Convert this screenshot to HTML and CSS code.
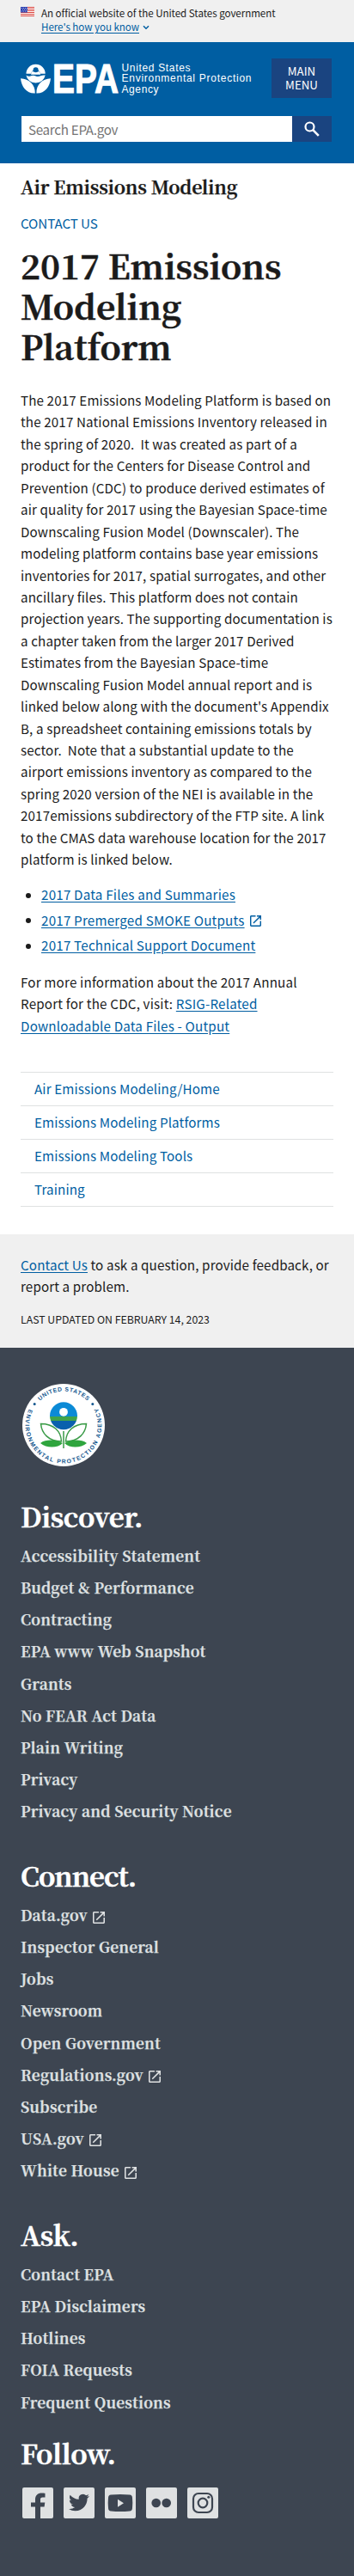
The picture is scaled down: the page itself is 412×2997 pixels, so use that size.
FILE: index.html
```html
<!DOCTYPE html>
<html lang="en">
<head>
<meta charset="utf-8">
<title>2017 Emissions Modeling Platform | US EPA</title>
<link rel="stylesheet" href="styles.css">
</head>
<body>
<svg width="0" height="0" class="defs" aria-hidden="true">
  <symbol id="ext" viewBox="0 0 18 18"><path fill="currentColor" d="M16 16H2V2h7V0H2C.9 0 0 .9 0 2v14c0 1.100.9 2 2 2h14c1.100 0 2-.9 2-2V9h-2v7zM11 0v2h3.590l-9.830 9.830 1.410 1.410L16 3.410V7h2V0h-7z"/></symbol>
</svg>

<section class="banner">
  <svg class="flag" viewBox="0 0 16 11">
    <rect width="16" height="11" fill="#fff"/>
    <path d="M0 .5h16M0 2.500h16M0 4.500h16M0 6.500h16M0 8.500h16M0 10.500h16" stroke="#d9413a"/>
    <rect width="8" height="6.500" fill="#2b3fb0"/>
    <path d="M1 1.500h7M2 3.200h6M1 5h7" stroke="#fff" stroke-width=".8" stroke-dasharray=".8 1.200"/>
  </svg>
  <div>
    <p>An official website of the United States government</p>
    <p class="know"><a href="#">Here's how you know</a><svg viewBox="0 0 8 6"><path d="M1 1.300l3 3 3-3" fill="none" stroke="#005ea2" stroke-width="1.500"/></svg></p>
  </div>
</section>

<header class="header">
  <div class="header-top">
    <svg class="logo" viewBox="0 0 270 38">
      <g fill="#fff">
        <path d="M6.500 12.800a11.100 11.100 0 0 1 22.200 0h-5.600a5.600 5.600 0 0 0-11 0z"/>
        <path d="M12.800 10.300h9.600l.8 3.500h-11.200z"/>
        <circle cx="17.600" cy="8.300" r="3" fill="#005ea2"/>
        <path d="M6.400 14.600q2.800 2 5.600.6 2.800-1 5.600.2 2.800 1.200 5.600-.2 2.800-1 5.500-.6-2 8.500-11.100 8.800-9.200-.3-11.200-8.800z"/>
        <path d="M0 18.200C10 19 17 25 16.800 35.500 7 36 1 28 0 18.200zM35 18.200C25 19 18.200 25 18.400 35.500 28 36 34 28 35 18.200z"/>
      </g>
      <text class="logo-epa" x="37" y="35" textLength="77" lengthAdjust="spacingAndGlyphs">EPA</text>
      <g class="logo-name">
        <text x="117.500" y="9.800" textLength="80">United States</text>
        <text x="117.500" y="22.300" textLength="151">Environmental Protection</text>
        <text x="117.500" y="35" textLength="43">Agency</text>
      </g>
    </svg>
    <button class="menu">MAIN<br>MENU</button>
  </div>
  <form class="search">
    <input type="text" placeholder="Search EPA.gov">
    <button type="button" aria-label="Search"><svg viewBox="0 0 18 18"><circle cx="6.500" cy="6.500" r="5" fill="none" stroke="#fff" stroke-width="2.200"/><path d="M10.200 10.200l6.600 6.600" stroke="#fff" stroke-width="2.600"/></svg></button>
  </form>
</header>

<main class="main">
  <h2 class="site">Air Emissions Modeling</h2>
  <a class="contact" href="#">CONTACT US</a>
  <h1>2017 Emissions<br>Modeling<br>Platform</h1>
  <p class="text">The 2017 Emissions Modeling Platform is based on<br>the 2017 National Emissions Inventory released in<br>the spring of 2020.&nbsp; It was created as part of a<br>product for the Centers for Disease Control and<br>Prevention (CDC) to produce derived estimates of<br>air quality for 2017 using the Bayesian Space-time<br>Downscaling Fusion Model (Downscaler). The<br>modeling platform contains base year emissions<br>inventories for 2017, spatial surrogates, and other<br>ancillary files. This platform does not contain<br>projection years. The supporting documentation is<br>a chapter taken from the larger 2017 Derived<br>Estimates from the Bayesian Space-time<br>Downscaling Fusion Model annual report and is<br>linked below along with the document's Appendix<br>B, a spreadsheet containing emissions totals by<br>sector.&nbsp; Note that a substantial update to the<br>airport emissions inventory as compared to the<br>spring 2020 version of the NEI is available in the<br>2017emissions subdirectory of the FTP site. A link<br>to the CMAS data warehouse location for the 2017<br>platform is linked below.</p>
  <ul class="files">
    <li><a href="#">2017 Data Files and Summaries</a></li>
    <li><a href="#">2017 Premerged SMOKE Outputs</a><svg class="ext"><use href="#ext"/></svg></li>
    <li><a href="#">2017 Technical Support Document</a></li>
  </ul>
  <p class="text more">For more information about the 2017 Annual<br>Report for the CDC, visit: <a href="#">RSIG-Related<br>Downloadable Data Files - Output</a></p>
  <nav class="sidenav">
    <a href="#">Air Emissions Modeling/Home</a>
    <a href="#">Emissions Modeling Platforms</a>
    <a href="#">Emissions Modeling Tools</a>
    <a href="#">Training</a>
  </nav>
</main>

<section class="feedback">
  <p class="text"><a href="#">Contact Us</a> to ask a question, provide feedback, or<br>report a problem.</p>
  <p class="updated">LAST UPDATED ON FEBRUARY 14, 2023</p>
</section>

<footer class="footer">
  <svg class="seal" viewBox="0 0 96 96">
    <defs>
      <path id="arc-top" d="M8.500 48a39.500 39.500 0 0 1 79 0"/>
      <path id="arc-low" d="M8.160 28.570a44.400 44.400 0 1 0 79.680 0"/>
      <clipPath id="ball"><circle cx="48" cy="37.300" r="16"/></clipPath>
    </defs>
    <circle cx="48" cy="48" r="48" fill="#fff"/>
    <g class="seal-text">
      <text><textPath href="#arc-top" startOffset="31.500" textLength="61">UNITED STATES</textPath></text>
      <text><textPath href="#arc-low" startOffset="1" textLength="179">ENVIRONMENTAL PROTECTION AGENCY</textPath></text>
    </g>
    <circle cx="14.200" cy="23.500" r="1.500" fill="#14578f"/><circle cx="81.800" cy="23.500" r="1.500" fill="#14578f"/>
    <g clip-path="url(#ball)">
      <rect x="32" y="21" width="32" height="17" fill="#0b8ad6"/>
      <rect x="32" y="38" width="32" height="5" fill="#3fa34a"/>
      <rect x="32" y="43" width="32" height="11" fill="#0a60ad"/>
    </g>
    <circle cx="48" cy="32.800" r="4.900" fill="#fff"/>
    <path d="M48 55v20M21.500 46.500c1 11 9 20.500 24 20.500-.5-12-9-20.500-24-20.500zM74.500 46.500c-1 11-9 20.500-24 20.500.5-12 9-20.500 24-20.500z" fill="none" stroke="#3a9b47" stroke-width="1.500"/>
    <path d="M21 69c7-5 18-4 26 0-6 6-19 6-26 0zM75 69c-7-5-18-4-26 0 6 6 19 6 26 0z" fill="#2fa53d"/>
  </svg>

  <h2>Discover.</h2>
  <ul class="links">
    <li>Accessibility Statement</li>
    <li>Budget &amp; Performance</li>
    <li>Contracting</li>
    <li>EPA www Web Snapshot</li>
    <li>Grants</li>
    <li>No FEAR Act Data</li>
    <li>Plain Writing</li>
    <li>Privacy</li>
    <li>Privacy and Security Notice</li>
  </ul>

  <h2 class="connect">Connect.</h2>
  <ul class="links">
    <li>Data.gov<svg class="ext"><use href="#ext"/></svg></li>
    <li>Inspector General</li>
    <li>Jobs</li>
    <li>Newsroom</li>
    <li>Open Government</li>
    <li>Regulations.gov<svg class="ext"><use href="#ext"/></svg></li>
    <li>Subscribe</li>
    <li>USA.gov<svg class="ext"><use href="#ext"/></svg></li>
    <li>White House<svg class="ext"><use href="#ext"/></svg></li>
  </ul>

  <h2>Ask.</h2>
  <ul class="links last">
    <li>Contact EPA</li>
    <li>EPA Disclaimers</li>
    <li>Hotlines</li>
    <li>FOIA Requests</li>
    <li>Frequent Questions</li>
  </ul>

  <h2>Follow.</h2>
  <div class="social">
    <svg viewBox="0 0 36 36"><path d="M15 36V22.500h-5v-5h5V14c0-5 3-7.500 7.500-7.500 2 0 3 .2 4 .3v4.700h-2.800c-2.200 0-2.700 1-2.700 2.600v3.400h5.300l-.7 5H21V36z"/></svg>
    <svg viewBox="0 0 36 36"><path transform="translate(6 5.500)" d="M23.953 4.570a10 10 0 01-2.825.775 4.958 4.958 0 002.163-2.723c-.951.555-2.005.959-3.127 1.184a4.920 4.920 0 00-8.384 4.482C7.690 8.095 4.067 6.130 1.640 3.162a4.822 4.822 0 00-.666 2.475c0 1.710.87 3.213 2.188 4.096a4.904 4.904 0 01-2.228-.616v.06a4.923 4.923 0 003.946 4.827 4.996 4.996 0 01-2.212.085 4.936 4.936 0 004.604 3.417 9.867 9.867 0 01-6.102 2.105c-.39 0-.779-.023-1.170-.067a13.995 13.995 0 007.557 2.209c9.053 0 13.998-7.496 13.998-13.985 0-.21 0-.42-.015-.63A9.935 9.935 0 0024 4.590z"/></svg>
    <svg viewBox="0 0 36 36"><path fill-rule="evenodd" d="M7 8.500q11-1 22 0 2.800.2 3 3.500.6 6 0 12-.2 3.300-3 3.500-11 1-22 0-2.800-.2-3-3.500-.6-6 0-12 .2-3.300 3-3.500zM15 13.700v9l7-4.500z"/></svg>
    <svg viewBox="0 0 36 36"><circle cx="11.700" cy="18" r="5.300"/><circle cx="23.700" cy="18" r="5.300"/></svg>
    <svg viewBox="0 0 36 36"><rect class="line" x="7" y="7" width="22" height="22" rx="6"/><circle class="line" cx="18" cy="18" r="5.300"/><circle cx="24.800" cy="11.200" r="1.500"/></svg>
  </div>
</footer>
</body>
</html>
```
FILE: styles.css
```css
* { box-sizing: border-box; }

body {
  margin: 0;
  background: #fff;
  color: #1b1b1b;
  font: 15.2px/25.44px "Noto Sans CJK SC", "Noto Sans", sans-serif;
  letter-spacing: .12px;
}

h1, h2, p, ul { margin: 0; padding: 0; }
a { color: #005ea2; text-underline-offset: 2px; }
svg { display: block; flex: none; }
.defs { position: absolute; }

.banner {
  display: flex;
  gap: 8px;
  height: 49px;
  padding: 8px 24px 0;
  background: #f0f0f0;
  font-size: 11.6px;
  line-height: 16px;
  letter-spacing: -.05px;
  white-space: nowrap;
}
.banner > div { margin-top: -1px; }
.flag { width: 16px; height: 11px; }
.know { display: flex; align-items: center; gap: 4px; }
.know svg { width: 8px; height: 6px; margin-top: 2px; }

.header {
  height: 141px;
  padding: 19px 26px 0 24px;
  background: #005ea2;
}
.header-top { display: flex; justify-content: space-between; }
.logo { width: 270px; height: 38px; margin-top: 5px; overflow: visible; }
.logo-epa { font: bold 48.5px "Liberation Sans", Arial, sans-serif; fill: #fff; stroke: #fff; stroke-width: 1.2; letter-spacing: 0; }
.logo-name { font: 12px "Liberation Sans", Arial, sans-serif; fill: #fff; letter-spacing: 0; }
.menu {
  width: 70px;
  height: 46px;
  padding: 0;
  border: 0;
  background: #1a4480;
  color: #fff;
  font: 13.3px/16px "Noto Sans CJK SC", sans-serif;
}
.search { display: flex; height: 30px; margin-top: 21px; padding-left: 1px; }
.search input {
  flex: 1;
  min-width: 0;
  padding: 0 8px;
  border: 0;
  border-radius: 0;
  background: #fff;
  font: 15.2px "Noto Sans CJK SC", sans-serif;
  letter-spacing: -.3px;
}
.search input::placeholder { color: #757575; opacity: 1; }
.search button {
  display: grid;
  place-items: center;
  width: 46px;
  padding: 0;
  border: 0;
  background: #1a4480;
}
.search button svg { width: 18px; height: 18px; }

.main { height: 1246px; padding: 13.7px 24px 0; }
.main h1, .site, .footer h2, .links {
  font-family: "Noto Serif CJK SC", "DejaVu Serif Condensed", serif;
  font-weight: bold;
}
.main h1, .footer h2 { -webkit-text-stroke: .5px currentColor; }
.site, .links { -webkit-text-stroke: .25px currentColor; }
.site { font-size: 21.4px; line-height: 26px; letter-spacing: -.27px; }
.contact { display: block; margin-top: 17px; text-decoration: none; letter-spacing: -.1px; }
.main h1 { margin-top: 12.5px; font-size: 39px; line-height: 47px; letter-spacing: 0; }
.text { white-space: nowrap; }
h1 + .text { margin-top: 27.4px; }
.files { margin-top: 15.5px; list-style: none; }
.files li { display: flex; align-items: center; margin-bottom: 4px; letter-spacing: .2px; }
.files li::before { content: ""; width: 6px; height: 6px; margin: 2px 12px 0 6px; border-radius: 50%; background: #1b1b1b; }
.files .ext { width: 13px; height: 13px; margin: 3px 0 0 6px; color: #005ea2; }
.more { margin-top: 17.4px; letter-spacing: .18px; }
.sidenav { margin-top: 41.3px; border-bottom: 1px solid #dfe1e2; }
.sidenav a {
  display: block;
  height: 39px;
  padding: 6px 16px 0;
  border-top: 1px solid #dfe1e2;
  text-decoration: none;
}

.feedback { height: 132px; padding: 23px 24px 0; background: #f0f0f0; }
.updated { margin-top: 14.7px; font-size: 12.3px; line-height: 20px; letter-spacing: 0; }

.footer { height: 1429px; padding: 42px 24px 0; background: #3d4551; color: #dfe1e2; }
.seal { width: 96px; height: 96px; margin: 0 0 39px 2px; }
.seal-text { font: bold 6.8px "Liberation Sans", Arial, sans-serif; fill: #14578f; letter-spacing: 0; }
.footer h2 { color: #fff; font-size: 31.2px; line-height: 37px; letter-spacing: -.4px; }
.footer .connect { letter-spacing: -1px; }
.links {
  display: grid;
  gap: 17.13px;
  margin: 18px 0 46px;
  list-style: none;
  font-size: 17.2px;
  line-height: 20px;
  letter-spacing: .2px;
}
.links.last { margin-bottom: 30px; }
.links li { display: flex; align-items: center; height: 20px; }
.links .ext { width: 14px; height: 14px; margin: 5px 0 0 6px; }
.social { display: flex; gap: 12px; margin: 22px 0 0 2px; }
.social svg { width: 36px; height: 36px; border-radius: 2px; background: #dfe1e2; fill: #3d4551; }
.social .line { fill: none; stroke: #3d4551; stroke-width: 2.2; }
```
